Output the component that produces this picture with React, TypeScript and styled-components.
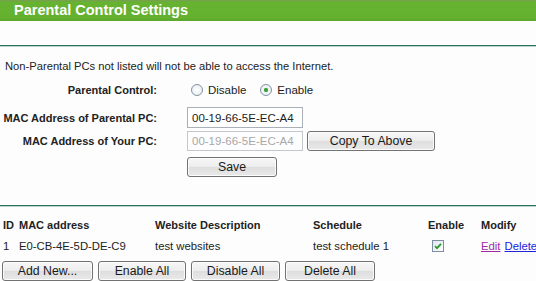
import React from "react";
import styled, { createGlobalStyle } from "styled-components";

const Global = createGlobalStyle`
  html, body { margin: 0; padding: 0; background: #fdfdfd; }
  body { font-family: "Liberation Sans", Arial, sans-serif; color: #222; }
  * { box-sizing: border-box; }
`;

const Page = styled.div`
  width: 536px;
  height: 281px;
  overflow: hidden;
  display: flex;
  flex-direction: column;
  background: #fdfdfd;
`;

const TitleBar = styled.div`
  flex: none;
  height: 21px;
  padding-left: 14px;
  background: linear-gradient(#74a34a 0, #74a34a 1px, #66b332 2px, #63b12f 18px, #5ca52b 21px);
  color: #fff;
  font-weight: bold;
  font-size: 14.5px;
  line-height: 21px;
`;

const Divider = styled.div<{ $top: number }>`
  flex: none;
  margin-top: ${(p) => p.$top}px;
  height: 2px;
  background: linear-gradient(#2f6d5f 0, #2f6d5f 1px, #b7d7cd 1px);
`;

const Note = styled.div`
  margin-top: 12px;
  padding-left: 5px;
  height: 14px;
  line-height: 14px;
  font-size: 11.2px;
  color: #222;
`;

const FormRow = styled.div<{ $top: number; $h: number }>`
  display: flex;
  align-items: center;
  gap: 30px;
  margin-top: ${(p) => p.$top}px;
  height: ${(p) => p.$h}px;
`;

const Label = styled.div`
  width: 157px;
  flex: none;
  text-align: right;
  font-weight: bold;
  font-size: 11px;
  color: #222;
`;

const Value = styled.div`
  display: flex;
  align-items: center;
  gap: 4px;
`;

const RadioGroup = styled.div`
  display: flex;
  align-items: center;
  padding-left: 4px;
  font-size: 11.5px;
`;

const RadioOpt = styled.label`
  display: flex;
  align-items: center;
  gap: 5px;
  margin-right: 14px;
  color: #222;
`;

const RadioDot = styled.span<{ $on?: boolean }>`
  width: 12px;
  height: 12px;
  border-radius: 50%;
  border: 1px solid #8293a6;
  background: radial-gradient(circle at 50% 50%, #ffffff 0, #f0f2f4 60%, #dde2e8 100%);
  position: relative;
  &::after {
    content: "";
    display: ${(p) => (p.$on ? "block" : "none")};
    position: absolute;
    left: 3px;
    top: 3px;
    width: 4px;
    height: 4px;
    border-radius: 50%;
    background: #3a9a3a;
    box-shadow: 0 0 1px #69c069;
  }
`;

const TextBox = styled.input<{ $h: number }>`
  width: 116px;
  height: ${(p) => p.$h}px;
  border: 1px solid #a9b0b8;
  background: #fff;
  padding: 0 4px;
  font-family: "Liberation Sans", Arial, sans-serif;
  font-size: 11.5px;
  color: #222;
  &:disabled {
    color: #a8a8a8;
    background: #fdfdfd;
    border-color: #c4c8cc;
  }
`;

const Button = styled.button<{ $w: number }>`
  width: ${(p) => p.$w}px;
  height: 20px;
  padding: 0;
  border: 1px solid #727272;
  border-radius: 3px;
  background: linear-gradient(#f8f8f8 0%, #ececec 50%, #dedede 51%, #e9e9e9 100%);
  font-family: "Liberation Sans", Arial, sans-serif;
  font-size: 12.3px;
  color: #1a1a1a;
  line-height: 18px;
  box-shadow: inset 0 0 0 1px #fbfbfb;
`;

const SaveWrap = styled.div`
  display: flex;
`;

const Table = styled.div`
  display: grid;
  grid-template-columns: 16px 136px 158px 115px 53px 1fr;
  padding-left: 3px;
  margin-top: 8px;
`;

const Cell = styled.div<{ $head?: boolean }>`
  height: ${(p) => (p.$head ? 20 : 21)}px;
  display: flex;
  align-items: center;
  white-space: nowrap;
  font-size: ${(p) => (p.$head ? "11px" : "11.3px")};
  font-weight: ${(p) => (p.$head ? "bold" : "normal")};
  color: #222;
  gap: 4px;
`;

const Check = styled.span`
  margin-left: 4px;
  display: flex;
`;

const Link = styled.a<{ $visited?: boolean }>`
  color: ${(p) => (p.$visited ? "#a22aa6" : "#2222dd")};
  text-decoration: underline;
  cursor: pointer;
`;

const ButtonBar = styled.div`
  display: flex;
  gap: 5px;
  padding-left: 2px;
  margin-top: 5px;
`;

export default function App() {
  return (
    <>
      <Global />
      <Page>
        <TitleBar>Parental Control Settings</TitleBar>
        <Divider $top={24} />
        <Note>Non-Parental PCs not listed will not be able to access the Internet.</Note>

        <FormRow $top={7} $h={20}>
          <Label>Parental Control:</Label>
          <RadioGroup>
            <RadioOpt>
              <RadioDot />
              Disable
            </RadioOpt>
            <RadioOpt>
              <RadioDot $on />
              Enable
            </RadioOpt>
          </RadioGroup>
        </FormRow>

        <FormRow $top={7} $h={21}>
          <Label>MAC Address of Parental PC:</Label>
          <Value>
            <TextBox $h={21} defaultValue="00-19-66-5E-EC-A4" />
          </Value>
        </FormRow>

        <FormRow $top={3} $h={20}>
          <Label>MAC Address of Your PC:</Label>
          <Value>
            <TextBox $h={20} disabled defaultValue="00-19-66-5E-EC-A4" />
            <Button $w={128}>Copy To Above</Button>
          </Value>
        </FormRow>

        <FormRow $top={6} $h={20}>
          <Label />
          <SaveWrap>
            <Button $w={90}>Save</Button>
          </SaveWrap>
        </FormRow>

        <Divider $top={28} />

        <Table>
          <Cell $head>ID</Cell>
          <Cell $head>MAC address</Cell>
          <Cell $head>Website Description</Cell>
          <Cell $head>Schedule</Cell>
          <Cell $head>Enable</Cell>
          <Cell $head>Modify</Cell>

          <Cell>1</Cell>
          <Cell>E0-CB-4E-5D-DE-C9</Cell>
          <Cell>test websites</Cell>
          <Cell>test schedule 1</Cell>
          <Cell>
            <Check>
              <svg width="12" height="12" viewBox="0 0 12 12">
                <defs>
                  <linearGradient id="cbg" x1="0" y1="0" x2="1" y2="1">
                    <stop offset="0" stopColor="#dfe6ee" />
                    <stop offset="1" stopColor="#ffffff" />
                  </linearGradient>
                </defs>
                <rect x="0.5" y="0.5" width="11" height="11" fill="url(#cbg)" stroke="#7d8ea3" />
                <path d="M3 6.2 L5 8.2 L9 3.8" fill="none" stroke="#2f9a2f" strokeWidth="1.8" />
              </svg>
            </Check>
          </Cell>
          <Cell>
            <Link $visited>Edit</Link>
            <Link>Delete</Link>
          </Cell>
        </Table>

        <ButtonBar>
          <Button $w={91}>Add New...</Button>
          <Button $w={88}>Enable All</Button>
          <Button $w={89}>Disable All</Button>
          <Button $w={90}>Delete All</Button>
        </ButtonBar>
      </Page>
    </>
  );
}
